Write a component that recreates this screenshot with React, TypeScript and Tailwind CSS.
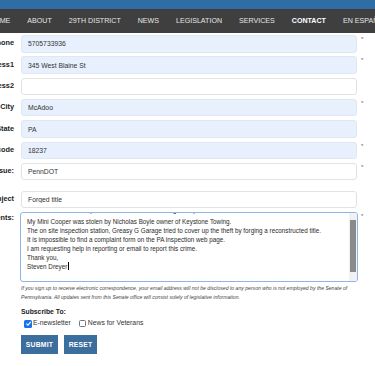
import React from "react";

const navItems = ["HOME", "ABOUT", "29TH DISTRICT", "NEWS", "LEGISLATION", "SERVICES", "CONTACT", "EN ESPAÑOL"];

type Field = { label: string; value: string; filled: boolean; required: boolean };

const fields: Field[] = [
  { label: "Phone", value: "5705733936", filled: true, required: true },
  { label: "Address1", value: "345 West Blaine St", filled: true, required: true },
  { label: "Address2", value: "", filled: false, required: false },
  { label: "City", value: "McAdoo", filled: true, required: true },
  { label: "State", value: "PA", filled: true, required: false },
  { label: "Zip code", value: "18237", filled: true, required: true },
  { label: "Issue:", value: "PennDOT", filled: false, required: true },
];

const comments = [
  "My Mini Cooper was stolen by Nicholas Boyle owner of Keystone Towing.",
  "The on site inspection station, Greasy G Garage tried to cover up the theft by forging a reconstructed title.",
  "It is impossible to find a complaint form on the PA inspection web page.",
  "I am requesting help in reporting or email to report this crime.",
  "Thank you,",
];

function Row({ field }: { field: Field }) {
  return (
    <div className="flex h-[17.5px]">
      <label className="-ml-[66px] w-[80px] shrink-0 self-center text-right text-[7.3px] font-bold text-[#222]">
        {field.label}
      </label>
      <input
        readOnly
        defaultValue={field.value}
        className={
          field.filled
            ? "ml-[7px] h-full w-[336px] shrink-0 rounded-[3px] border border-[#dfe7f3] bg-[#e8f0fe] pl-[6px] text-[6.8px] text-[#333] outline-none"
            : "ml-[7px] h-full w-[336px] shrink-0 rounded-[3px] border border-[#e2e2e2] bg-white pl-[6px] text-[6.8px] text-[#333] outline-none"
        }
      />
      {field.required && <span className="ml-[4px] mt-[1px] text-[6px] leading-none text-[#666]">*</span>}
    </div>
  );
}

export default function App() {
  return (
    <div className="relative h-[366px] w-[375px] overflow-hidden bg-white font-['Liberation_Sans',Arial,sans-serif]">
      <div className="h-[9px] bg-[#2f6da6]" />
      <nav className="-ml-[11px] flex h-[24px] items-center gap-[17px] whitespace-nowrap bg-[#3f3f3f] text-[7.1px] text-[#e6e6e6]">
        {navItems.map((n) => (
          <span key={n} className={n === "CONTACT" ? "font-bold text-white" : ""}>
            {n}
          </span>
        ))}
      </nav>

      <form className="pt-[2px]">
        <div className="flex flex-col gap-[3.83px]">
          {fields.map((f) => (
            <Row key={f.label} field={f} />
          ))}
        </div>

        <div className="mt-[10.5px]">
          <Row field={{ label: "Subject", value: "Forged title", filled: false, required: false }} />
        </div>

        <div className="mt-[4px] flex">
          <label className="-ml-[66px] mt-[1px] w-[80px] shrink-0 text-right text-[7.3px] font-bold text-[#222]">
            Comments:
          </label>
          <div className="ml-[6px] flex h-[70px] w-[338px] shrink-0 overflow-hidden rounded-[3px] border border-[#8fb5e6] bg-white">
            <div className="flex-1 whitespace-nowrap pl-[6px] text-[6.3px] leading-[9px] text-[#2a2a2a]">
              {/* line scrolled out of view above; only its descenders show */}
              <div className="h-[3.5px] overflow-hidden">
                <div className="-mt-[8px]">Hello, I would like to report a stolen vehicle and a forged inspection.</div>
              </div>
              {comments.map((c) => (
                <div key={c}>{c}</div>
              ))}
              <div className="flex items-center">
                Steven Dreyer
                <span className="ml-[1px] inline-block h-[8px] w-px bg-black" />
              </div>
            </div>
            <div className="flex w-[8px] flex-col bg-[#f1f1f1] pb-[9px] pt-[7px]">
              <div className="mx-[1px] flex-1 bg-[#8a8a8a]" />
            </div>
          </div>
          <span className="ml-[3px] mt-[1px] text-[6px] leading-none text-[#666]">*</span>
        </div>

        <p className="ml-[21px] mt-[2px] whitespace-nowrap text-[5.1px] italic leading-[9px] text-[#444]">
          If you sign up to receive electronic correspondence, your email address will not be disclosed to any person who is not employed by the Senate of
          <br />
          Pennsylvania. All updates sent from this Senate office will consist solely of legislative information.
        </p>

        <div className="ml-[21px] mt-[5px] text-[6.8px] font-bold leading-[10px] text-[#222]">Subscribe To:</div>

        <div className="ml-[24px] mt-[1px] flex items-center text-[6.8px] text-[#333]">
          <span className="flex h-[8px] w-[8px] items-center justify-center rounded-[1.5px] bg-[#1a73e8]">
            <svg viewBox="0 0 10 10" className="h-[7px] w-[7px]">
              <path d="M2 5.2 L4.2 7.3 L8.2 2.6" fill="none" stroke="white" strokeWidth="1.6" />
            </svg>
          </span>
          <span className="ml-[1px]">E-newsletter</span>
          <span className="ml-[8px] h-[7px] w-[7px] rounded-[1.5px] border border-[#767676] bg-white" />
          <span className="ml-[2px]">News for Veterans</span>
        </div>

        <div className="ml-[21px] mt-[6.5px] flex gap-[6px]">
          <button type="button" className="h-[19px] w-[37px] bg-[#3b6d9d] text-[6.8px] font-bold tracking-[0.2px] text-white">
            SUBMIT
          </button>
          <button type="button" className="h-[19px] w-[33px] bg-[#3b6d9d] text-[6.8px] font-bold tracking-[0.2px] text-white">
            RESET
          </button>
        </div>
      </form>
    </div>
  );
}
